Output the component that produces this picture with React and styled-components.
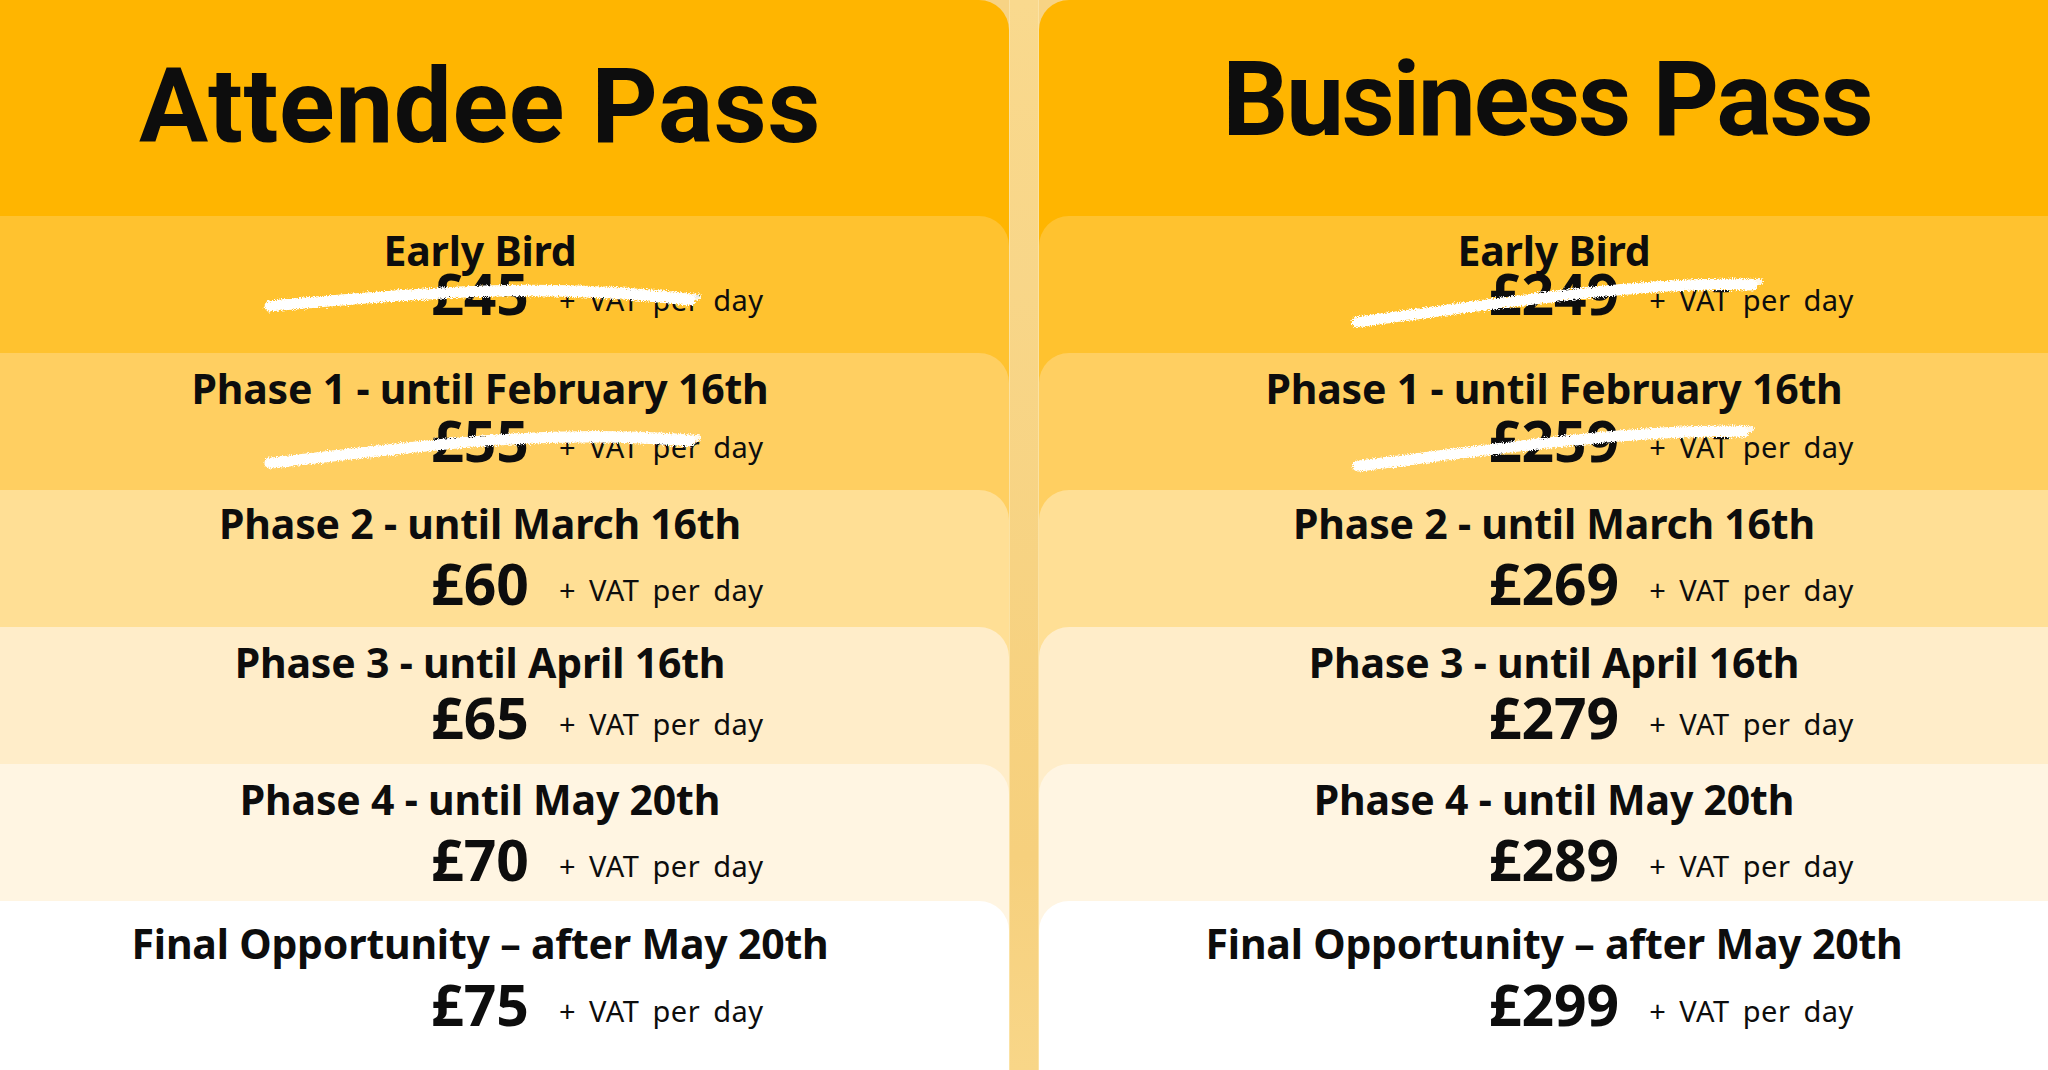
import React from 'react';
import styled, { createGlobalStyle } from 'styled-components';

const GAP_TONE = '#f7d384';
const TONES = ['#ffb500', '#ffc22f', '#ffcf61', '#ffdf95', '#ffedc9', '#fff5e2', '#ffffff'];

const Global = createGlobalStyle`
  html, body { margin: 0; padding: 0; }
  body {
    background: ${GAP_TONE};
    color: #0d0d0d;
    font-family: "Noto Sans", "Liberation Sans", sans-serif;
  }
`;

const Board = styled.div`
  display: grid;
  grid-template-columns: 1009px 30px 1009px;
  width: 2048px;
  height: 1070px;
  overflow: hidden;
`;

const Divider = styled.div`
  background: linear-gradient(180deg, #f9d98e 0%, #f6d07d 80%, #f8d688 100%);
  box-shadow: inset 1px 0 0 #fbe2a4, inset -1px 0 0 #fbe2a4;
`;

const Column = styled.div`
  display: flex;
  flex-direction: column;
  height: 100%;
`;

const Band = styled.div`
  display: flex;
  flex: ${p => (p.$last ? '1 1 auto' : `0 0 ${p.$h}px`)};
  background: ${p => p.$under};
`;

const Panel = styled.div`
  flex: 1;
  display: flex;
  flex-direction: column;
  align-items: center;
  text-align: center;
  background: ${p => p.$tone};
  ${p => (p.$side === 'left' ? 'border-top-right-radius: 30px;' : 'border-top-left-radius: 30px;')}
  padding: ${p => p.$pad}px ${p => p.$padR}px 0 ${p => p.$padL}px;
`;

const Title = styled.h1`
  margin: 0;
  font-family: Roboto, "Noto Sans", sans-serif;
  font-weight: 700;
  font-size: 103px;
  line-height: 103px;
  letter-spacing: ${p => p.$track}px;
  white-space: nowrap;
`;

const Label = styled.div`
  font-weight: 700;
  font-size: 41px;
  line-height: 48px;
  letter-spacing: -0.2px;
  white-space: nowrap;
`;

const PriceLine = styled.div`
  position: relative;
  width: 100%;
  display: grid;
  grid-template-columns: 1fr auto 1fr;
  align-items: end;
  margin-top: ${p => p.$gap}px;
`;

const Amount = styled.span`
  grid-column: 2;
  font-weight: 700;
  font-size: 57px;
  line-height: 60px;
`;

const Vat = styled.span`
  grid-column: 3;
  justify-self: start;
  padding-left: 30px;
  font-weight: 400;
  font-size: 29px;
  line-height: 46px;
  letter-spacing: 0.5px;
  word-spacing: 5px;
  white-space: nowrap;
`;

const StrikeSvg = styled.svg`
  position: absolute;
  left: 50%;
  top: 12px;
  margin-left: -215px;
  width: 430px;
  height: 60px;
  overflow: visible;
  pointer-events: none;
`;

function Strike({ d, id }) {
  return (
    <StrikeSvg viewBox="0 0 430 60">
      <defs>
        <filter id={id} x="-5%" y="-50%" width="110%" height="200%">
          <feTurbulence type="fractalNoise" baseFrequency="0.9" numOctaves="2" seed="3" result="noise" />
          <feDisplacementMap in="SourceGraphic" in2="noise" scale="6" xChannelSelector="R" yChannelSelector="G" />
        </filter>
      </defs>
      <g filter={`url(#${id})`}>
        <path d={d} fill="none" stroke="#ffffff" strokeWidth="11" strokeLinecap="round" />
        <path d={d} fill="none" stroke="#ffffff" strokeWidth="6" strokeLinecap="round" transform="translate(8 -3)" opacity="0.9" />
      </g>
    </StrikeSvg>
  );
}

const passes = [
  {
    key: 'attendee',
    side: 'left',
    title: 'Attendee Pass',
    track: 0.7,
    titleTop: 55,
    titlePadL: 0,
    titlePadR: 49,
    padL: 0,
    padR: 49,
    tiers: [
      { label: 'Early Bird', price: '£45', pad: 10, gap: -11, strike: 'M5 31 C120 22, 250 5, 425 25' },
      { label: 'Phase 1 - until February 16th', price: '£55', pad: 11, gap: -2, strike: 'M5 41 C130 28, 260 6, 425 19' },
      { label: 'Phase 2 - until March 16th', price: '£60', pad: 9, gap: 6 },
      { label: 'Phase 3 - until April 16th', price: '£65', pad: 11, gap: 1 },
      { label: 'Phase 4 - until May 20th', price: '£70', pad: 11, gap: 6 },
      { label: 'Final Opportunity – after May 20th', price: '£75', pad: 18, gap: 7 },
    ],
  },
  {
    key: 'business',
    side: 'right',
    title: 'Business Pass',
    track: -2,
    titleTop: 48,
    titlePadL: 7,
    titlePadR: 0,
    padL: 21,
    padR: 0,
    tiers: [
      { label: 'Early Bird', price: '£249', pad: 10, gap: -11, strike: 'M18 47 C150 30, 300 6, 413 10' },
      { label: 'Phase 1 - until February 16th', price: '£259', pad: 11, gap: -2, strike: 'M19 44 C150 28, 300 6, 404 10' },
      { label: 'Phase 2 - until March 16th', price: '£269', pad: 9, gap: 6 },
      { label: 'Phase 3 - until April 16th', price: '£279', pad: 11, gap: 1 },
      { label: 'Phase 4 - until May 20th', price: '£289', pad: 11, gap: 6 },
      { label: 'Final Opportunity – after May 20th', price: '£299', pad: 18, gap: 7 },
    ],
  },
];

function PassColumn({ pass }) {
  return (
    <Column>
      <Band $h={216} $under={GAP_TONE}>
        <Panel $tone={TONES[0]} $side={pass.side} $pad={pass.titleTop} $padL={pass.titlePadL} $padR={pass.titlePadR}>
          <Title $track={pass.track}>{pass.title}</Title>
        </Panel>
      </Band>
      {pass.tiers.map((tier, i) => {
        const last = i === pass.tiers.length - 1;
        return (
          <Band key={tier.label} $h={137} $last={last} $under={TONES[i]}>
            <Panel $tone={TONES[i + 1]} $side={pass.side} $pad={tier.pad} $padL={pass.padL} $padR={pass.padR}>
              <Label>{tier.label}</Label>
              <PriceLine $gap={tier.gap}>
                <Amount>{tier.price}</Amount>
                <Vat>+ VAT per day</Vat>
                {tier.strike && <Strike d={tier.strike} id={`rough-${pass.key}-${i}`} />}
              </PriceLine>
            </Panel>
          </Band>
        );
      })}
    </Column>
  );
}

export default function App() {
  return (
    <>
      <Global />
      <Board>
        <PassColumn pass={passes[0]} />
        <Divider />
        <PassColumn pass={passes[1]} />
      </Board>
    </>
  );
}
